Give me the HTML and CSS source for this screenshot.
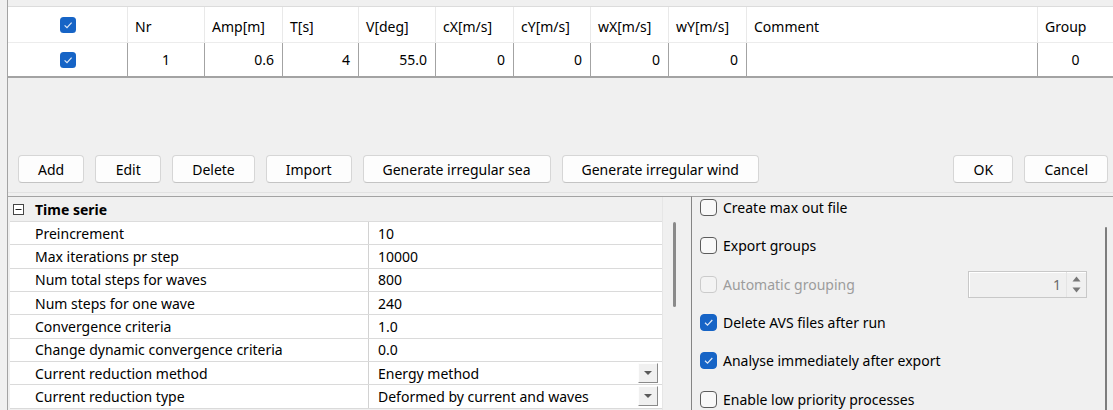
FILE: index.html
```html
<!DOCTYPE html>
<html lang="en">
<head>
<meta charset="utf-8">
<title>Time series settings</title>
<link rel="stylesheet" href="styles.css">
</head>
<body>
<div class="window">

  <div class="sheet">
    <div class="sheet-row sheet-head">
      <div class="cell cell-check">
        <svg class="check" viewBox="0 0 16 16"><rect x="0" y="0" width="16" height="16" rx="3.5" fill="#1664c6"/><polyline points="4.6,8.4 7,10.7 11.6,5.7" fill="none" stroke="#dfe9f7" stroke-width="1.2"/></svg>
      </div>
      <div class="cell">Nr</div>
      <div class="cell">Amp[m]</div>
      <div class="cell">T[s]</div>
      <div class="cell">V[deg]</div>
      <div class="cell">cX[m/s]</div>
      <div class="cell">cY[m/s]</div>
      <div class="cell">wX[m/s]</div>
      <div class="cell">wY[m/s]</div>
      <div class="cell">Comment</div>
      <div class="cell">Group</div>
    </div>
    <div class="sheet-row sheet-data">
      <div class="cell cell-check">
        <svg class="check" viewBox="0 0 16 16"><rect x="0" y="0" width="16" height="16" rx="3.5" fill="#1664c6"/><polyline points="4.6,8.4 7,10.7 11.6,5.7" fill="none" stroke="#dfe9f7" stroke-width="1.2"/></svg>
      </div>
      <div class="cell cell-center">1</div>
      <div class="cell">0.6</div>
      <div class="cell">4</div>
      <div class="cell">55.0</div>
      <div class="cell">0</div>
      <div class="cell">0</div>
      <div class="cell">0</div>
      <div class="cell">0</div>
      <div class="cell"></div>
      <div class="cell cell-group">0</div>
    </div>
  </div>

  <div class="actions">
    <button class="btn btn-short">Add</button>
    <button class="btn btn-short">Edit</button>
    <button class="btn">Delete</button>
    <button class="btn">Import</button>
    <button class="btn">Generate irregular sea</button>
    <button class="btn">Generate irregular wind</button>
    <span class="spacer"></span>
    <button class="btn btn-ok">OK</button>
    <button class="btn">Cancel</button>
  </div>

  <div class="lower">
    <div class="props-pane">
      <div class="props">
        <div class="prop-cat">
          <svg class="collapse" viewBox="0 0 11 11"><rect x="0.5" y="0.5" width="10" height="10" fill="#fff" stroke="#444"/><line x1="2.5" y1="5.5" x2="8.5" y2="5.5" stroke="#222"/></svg>
          <span>Time serie</span>
        </div>
        <div class="prop"><div class="prop-name">Preincrement</div><div class="prop-value">10</div></div>
        <div class="prop"><div class="prop-name">Max iterations pr step</div><div class="prop-value">10000</div></div>
        <div class="prop"><div class="prop-name">Num total steps for waves</div><div class="prop-value">800</div></div>
        <div class="prop"><div class="prop-name">Num steps for one wave</div><div class="prop-value">240</div></div>
        <div class="prop"><div class="prop-name">Convergence criteria</div><div class="prop-value">1.0</div></div>
        <div class="prop"><div class="prop-name">Change dynamic convergence criteria</div><div class="prop-value">0.0</div></div>
        <div class="prop"><div class="prop-name">Current reduction method</div><div class="prop-value"><span>Energy method</span><span class="drop"><span class="caret"></span></span></div></div>
        <div class="prop"><div class="prop-name">Current reduction type</div><div class="prop-value"><span>Deformed by current and waves</span><span class="drop"><span class="caret"></span></span></div></div>
      </div>
      <div class="vscroll"><span class="thumb"></span></div>
    </div>

    <div class="options-pane">
      <div class="options">
        <div class="option-list">
          <div class="option"><span class="box"></span><span>Create max out file</span></div>
          <div class="option"><span class="box"></span><span>Export groups</span></div>
          <div class="option option-off">
            <span class="box"></span><span>Automatic grouping</span>
            <div class="spin">
              <span class="spin-value">1</span>
              <span class="spin-arrows">
                <svg viewBox="0 0 9 6" class="arrow"><polygon points="4.5,0.5 8.5,5.5 0.5,5.5" fill="#777"/></svg>
                <svg viewBox="0 0 9 6" class="arrow"><polygon points="0.5,0.5 8.5,0.5 4.5,5.5" fill="#777"/></svg>
              </span>
            </div>
          </div>
          <div class="option"><span class="box box-on"><svg viewBox="0 0 17 17"><polyline points="5,8.8 7.5,11.2 12.3,6" fill="none" stroke="#dfe9f7" stroke-width="1.2"/></svg></span><span>Delete AVS files after run</span></div>
          <div class="option"><span class="box box-on"><svg viewBox="0 0 17 17"><polyline points="5,8.8 7.5,11.2 12.3,6" fill="none" stroke="#dfe9f7" stroke-width="1.2"/></svg></span><span>Analyse immediately after export</span></div>
          <div class="option"><span class="box"></span><span>Enable low priority processes</span></div>
        </div>
      </div>
      <div class="vscroll-r"><span class="thumb thumb-long"></span></div>
    </div>
  </div>

</div>
</body>
</html>
```

FILE: styles.css
```css
html, body {
  margin: 0;
  padding: 0;
}

body {
  width: 1113px;
  height: 410px;
  overflow: hidden;
  background: #f0f0f0;
  color: #000;
  font-family: "Noto Sans", "Open Sans", sans-serif;
  font-size: 14px;
}

.window {
  margin-left: 7px;
  height: 410px;
  box-sizing: border-box;
  border-left: 1px solid #a3a3a3;
  overflow: hidden;
}

/* ---- data sheet ---- */
.sheet {
  margin-top: 6px;
  border-top: 1px solid #dcdcdc;
  background: #fff;
}

.sheet-row {
  display: grid;
  grid-template-columns: 120px 77px 78px 76px 77px 78px 77px 78px 78px 291px 100px;
  box-sizing: border-box;
}

.cell {
  display: flex;
  align-items: center;
  box-sizing: border-box;
  white-space: nowrap;
  overflow: hidden;
}

.sheet-head {
  height: 36px;
  border-bottom: 1px solid #ececec;
}

.sheet-head .cell {
  border-right: 1px solid #e9e9e9;
  padding: 4px 0 0 7px;
}

.sheet-data {
  height: 35px;
  border-bottom: 2px solid #a3a3a3;
}

.sheet-data .cell {
  border-right: 1px solid #a3a3a3;
  justify-content: flex-end;
  padding-right: 8px;
}

.sheet-row .cell-check {
  justify-content: center;
  padding: 0;
}

.sheet-data .cell-center,
.sheet-data .cell-group {
  justify-content: center;
  padding: 0;
}

.sheet-data .cell-group {
  padding-right: 24px;
}

.check {
  width: 16px;
  height: 16px;
  display: block;
}

/* ---- button bar ---- */
.actions {
  display: flex;
  align-items: center;
  gap: 11px;
  margin-top: 77px;
  padding: 0 5px 0 10px;
}

.btn {
  height: 28px;
  padding: 0 19px;
  font: inherit;
  color: #000;
  background: #fdfdfd;
  border: 1px solid #d6d6d6;
  border-bottom-color: #c4c4c4;
  border-radius: 4px;
}

.btn-short {
  min-width: 66px;
}

.btn-ok {
  min-width: 60px;
}

.spacer {
  flex: 1;
}

/* ---- lower split ---- */
.lower {
  display: flex;
  margin-top: 9px;
  padding-top: 3px;
  border-top: 1px solid #e2e2e2;
}

.props-pane {
  width: 684px;
  height: 230px;
  box-sizing: border-box;
  display: flex;
  border-top: 1px solid #a3a3a3;
  border-right: 1px solid #858585;
}

.props {
  width: 652px;
  margin-left: 2px;
}

.prop-cat {
  height: 25px;
  box-sizing: border-box;
  display: flex;
  align-items: center;
  gap: 11px;
  padding-left: 3px;
  font-weight: bold;
  border-bottom: 1px solid #dcdcdc;
}

.collapse {
  width: 11px;
  height: 11px;
  display: block;
}

.prop {
  display: flex;
  height: 23.33px;
  box-sizing: border-box;
  background: #fff;
  border-bottom: 1px solid #dadada;
}

.prop-name {
  width: 359px;
  box-sizing: border-box;
  padding-left: 25px;
  display: flex;
  align-items: center;
  border-right: 1px solid #d2d2d2;
  white-space: nowrap;
}

.prop-value {
  flex: 1;
  display: flex;
  align-items: center;
  padding-left: 9px;
  white-space: nowrap;
}

.drop {
  margin-left: auto;
  margin-right: 4px;
  width: 20px;
  height: 20px;
  box-sizing: border-box;
  display: flex;
  align-items: center;
  justify-content: center;
  background: #f0f0f0;
  border: 1px solid;
  border-color: #fdfdfd #8a8a8a #8a8a8a #fdfdfd;
}

.caret {
  width: 0;
  height: 0;
  border-left: 4px solid transparent;
  border-right: 4px solid transparent;
  border-top: 4px solid #5a5a5a;
}

.vscroll {
  flex: 1;
  padding-left: 10px;
  border-left: 1px solid #e6e6e6;
}

.thumb {
  display: block;
  width: 3px;
  height: 85px;
  margin-top: 25px;
  border-radius: 2px;
  background: #8a8a8a;
}

/* ---- options column ---- */
.options-pane {
  flex: 1;
  height: 230px;
  display: flex;
  border-top: 1px solid #a3a3a3;
}

.options {
  flex: 1;
  overflow: hidden;
  padding-left: 8px;
}

.option-list {
  margin-top: -8.5px;
}

.option {
  height: 38.3px;
  display: flex;
  align-items: center;
  gap: 6px;
  white-space: nowrap;
}

.box {
  width: 17px;
  height: 17px;
  box-sizing: border-box;
  flex: none;
  border: 1px solid #5c5c5c;
  border-radius: 4px;
  background: #f8f8f8;
}

.box svg {
  display: block;
  width: 17px;
  height: 17px;
  margin: -1px;
}

.box-on {
  background: #1664c6;
  border-color: #1664c6;
}

.option-off {
  color: #9c9c9c;
}

.option-off .box {
  border-color: #cbcbcb;
  background: #f3f3f3;
}

.spin {
  margin-left: auto;
  margin-right: 6px;
  width: 119px;
  height: 27px;
  box-sizing: border-box;
  display: flex;
  border: 1px solid #c8c8c8;
  background: #f0f0f0;
  box-shadow: inset 1px 1px 0 #fff;
  color: #6a6a6a;
}

.spin-value {
  flex: 1;
  display: flex;
  align-items: center;
  justify-content: flex-end;
  padding-right: 5px;
}

.spin-arrows {
  width: 19px;
  display: flex;
  flex-direction: column;
  justify-content: center;
  align-items: center;
  gap: 5px;
  border-left: 1px solid #e4e4e4;
}

.arrow {
  width: 9px;
  height: 6px;
  display: block;
}

.vscroll-r {
  width: 20px;
  padding-left: 12px;
  box-sizing: border-box;
}

.thumb-long {
  width: 2px;
  height: 200px;
  margin-top: 30px;
  border-radius: 1px;
  background: #7d7d7d;
}
```
